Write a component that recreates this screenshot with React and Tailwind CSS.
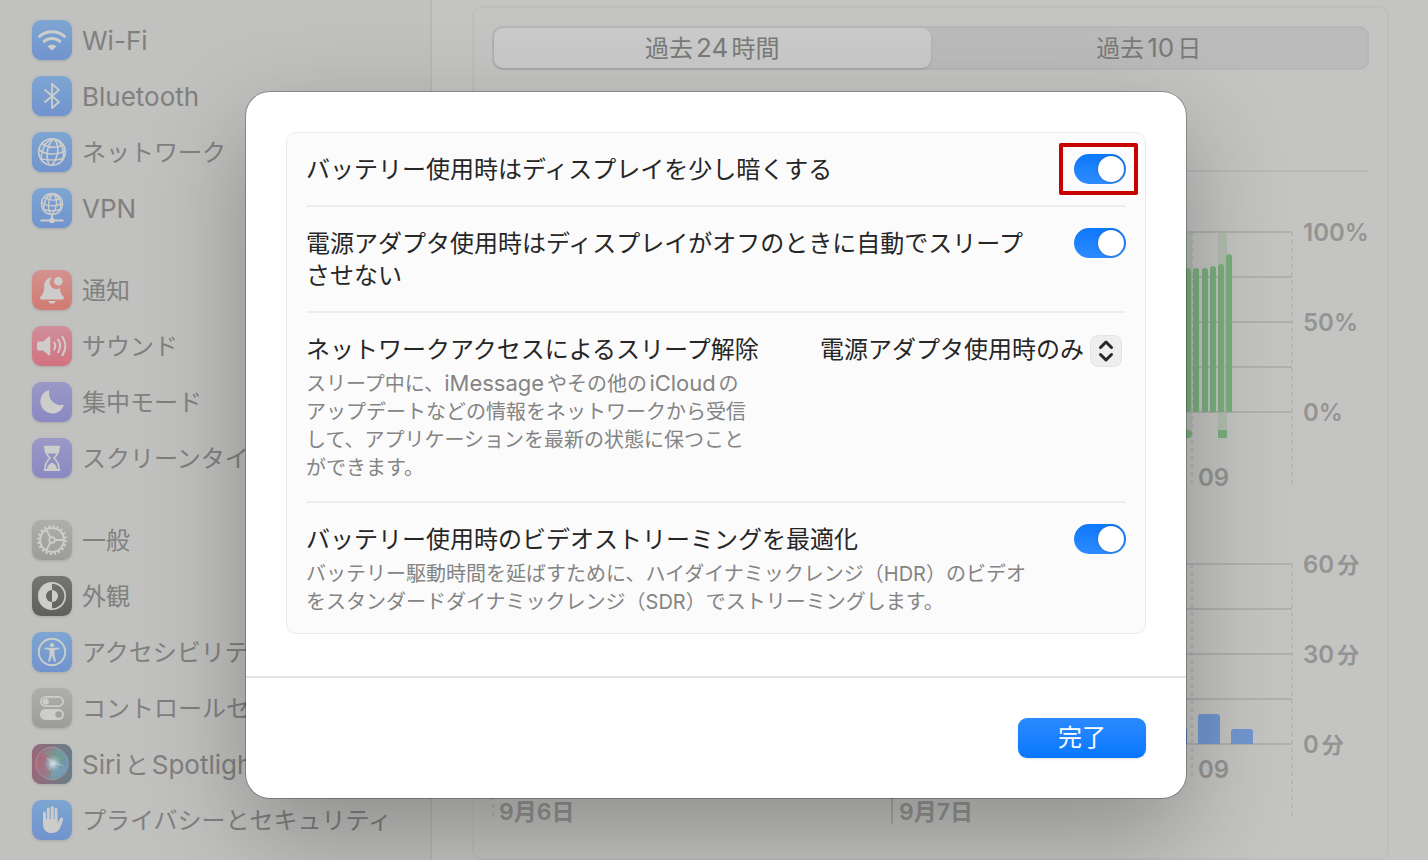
import React, { useState } from 'react';

const INK = '#cdcdcb';

const TILE = {
  blue: 'from-[#7ea5d2] to-[#7093cd]',
  red: 'from-[#d3938f] to-[#d17a72]',
  pink: 'from-[#d08e9c] to-[#d2727f]',
  purple: 'from-[#9a98c6] to-[#8a89c2]',
  gray: 'from-[#aeaeac] to-[#9c9c9a]',
  dark: 'from-[#757574] to-[#5f5f5e]',
  siri: 'from-[#8f6b7c] to-[#64808a]',
};

// Latin runs are set a step larger than the Japanese around them
function Mixed({ text, latin = 'text-[26px]' }) {
  return text.split(/([!-~]+)/).map((run, i) =>
    i % 2 ? <span key={i} className={latin}>{run}</span> : run
  );
}

function Glyph({ children }) {
  return (
    <svg width="40" height="40" viewBox="0 0 40 40" fill="none" stroke={INK} aria-hidden="true">
      {children}
    </svg>
  );
}

const wifi = (
  <Glyph>
    <g strokeWidth="3">
      <path d="M6.6 17.2a19 19 0 0 1 26.8 0" />
      <path d="M11.4 22.1a12.2 12.2 0 0 1 17.2 0" />
    </g>
    <path d="M15.6 26.4a6.2 6.2 0 0 1 8.8 0L20 30.6z" fill={INK} stroke="none" />
  </Glyph>
);

const bluetooth = (
  <Glyph>
    <path d="M12.5 13.5L27 26l-7 6V8l7 6-14.5 12.5" strokeWidth="1.8" strokeLinejoin="round" />
  </Glyph>
);

const network = (
  <Glyph>
    <g strokeWidth="1.6">
      <circle cx="20" cy="20" r="13.3" />
      <path d="M22 6.8c-6 4-9 15-5 26.2M22 6.8c5 6 6 16-2 26.4M22 6.8C15 8 10 14 9 27.5M22 6.8C28 9 32 15 31.5 26" />
      <path d="M10 11.5c6 4.5 14 4.5 21 1.5M7 18c8 5 18 5 26.3 1M9 27c7 1 17 2 22.5-1" />
    </g>
  </Glyph>
);

const vpn = (
  <Glyph>
    <g strokeWidth="1.4">
      <circle cx="20" cy="16" r="10.5" />
      <path d="M21.5 5.6c-5 4-6.5 12-3.5 20.6M21.5 5.6c4 5 4.5 13-1.5 20.9M21.5 5.6C15.5 7 12 12 11.5 21M21.5 5.6C27 8 29.5 13 28.5 21" />
      <path d="M12.5 9.5c4.5 3 11 3 16 1M9.8 15c6 3.5 14 3.5 20.6.5M11.5 21.5c5 1.5 12 1.5 17 0" />
      <path d="M20 26.5v5M8.5 32.5h23" strokeWidth="2" />
    </g>
    <circle cx="20" cy="32.5" r="2.8" fill={INK} stroke="none" />
  </Glyph>
);

const bell = (
  <Glyph>
    <g fill={INK} stroke="none">
      <path d="M20.5 7.2c-5.5.3-8.3 4-8.3 8.8 0 5.2-.8 7.3-2.6 9.4-1.4 1.5-1.8 2.2-1.5 3.2.2.7.7 1 1.5 1h20.8c.8 0 1.3-.3 1.5-1 .3-1-.1-1.7-1.5-3.2-1.5-1.8-2.3-3.8-2.5-7.4a6.2 6.2 0 0 1-7.4-10.8z" />
      <path d="M16.2 31h7.6c-.5 1.6-2 2.6-3.8 2.6s-3.3-1-3.8-2.6z" />
      <circle cx="26.3" cy="11.3" r="5.2" fill="#d28c87" />
      <circle cx="26.3" cy="11.3" r="4.3" />
    </g>
  </Glyph>
);

const speaker = (
  <Glyph>
    <path d="M5 17.2c0-1 .6-1.6 1.6-1.6h4.6l5.2-4.6c1-.9 1.9-.5 1.9.7v16.6c0 1.2-.9 1.6-1.9.7l-5.2-4.6H6.6c-1 0-1.6-.6-1.6-1.6z" fill={INK} stroke="none" />
    <g strokeWidth="2" strokeLinecap="round">
      <path d="M22.3 16.5c1.2 2.2 1.2 4.8 0 7" />
      <path d="M26.2 13.7c2.4 3.9 2.4 8.7 0 12.6" />
      <path d="M30.5 10.7c3.6 5.8 3.6 12.8 0 18.6" />
    </g>
  </Glyph>
);

const moon = (
  <Glyph>
    <path d="M16.3 8.2a12 12 0 1 0 15.4 15.3c.2-.6-.3-1-.9-.8A11.6 11.6 0 0 1 17.2 9c.2-.6-.4-1-.9-.8z" fill={INK} stroke="none" />
  </Glyph>
);

const hourglass = (
  <Glyph>
    <path d="M13.3 8.5h13.4c.8 5-1 8-4.7 11.5 3.7 3.5 5.5 7 4.7 12H13.3c-.8-5 1-8.5 4.7-12-3.7-3.5-5.5-6.5-4.7-11.5z" strokeWidth="1.7" strokeLinejoin="round" />
    <path d="M13.3 8.5h13.4c.3 3.5-.2 5.5-2 7h-9.4c-1.8-1.5-2.3-3.5-2-7zM20 17.5v7c3 1.5 4.8 3.5 5 6.5H15c.2-3 2-5 5-6.5zM11.8 8h16.4v2H11.8zM11.8 31h16.4v2H11.8z" fill={INK} stroke="none" />
  </Glyph>
);

const gear = (
  <Glyph>
    <circle cx="20" cy="20" r="13.7" strokeWidth="2.4" strokeDasharray="2.2 2.104" />
    <circle cx="20" cy="20" r="11.9" strokeWidth="2" />
    <circle cx="20" cy="20" r="2.8" strokeWidth="1.7" />
    <path d="M22.8 20h9M18.6 17.6l-4.5-7.8M18.6 22.4l-4.5 7.8" strokeWidth="1.9" />
  </Glyph>
);

// Left half solid, right half outlined, with the inner disc reversed
const appearance = (
  <Glyph>
    <circle cx="20" cy="20" r="13.2" strokeWidth="1.7" />
    <g stroke="none">
      <path d="M20 7a13 13 0 0 0 0 26z" fill={INK} />
      <path d="M20 14a6 6 0 0 0 0 12z" fill="#666665" />
      <path d="M20 14a6 6 0 0 1 0 12z" fill={INK} />
    </g>
  </Glyph>
);

const accessibility = (
  <Glyph>
    <circle cx="20" cy="20" r="13.2" strokeWidth="1.9" />
    <g fill={INK} stroke="none">
      <circle cx="20" cy="13.2" r="2.1" />
      <path d="M13.4 15.4c-1 0-1.2 1.4-.2 1.7l4.4 1.1v4.3l-1.4 6.2c-.2 1 1.4 1.5 1.8.5l2-5.7 2 5.7c.4 1 2 .5 1.8-.5l-1.4-6.2v-4.3l4.4-1.1c1-.3.8-1.7-.2-1.7L20 16z" />
    </g>
  </Glyph>
);

const controls = (
  <Glyph>
    <rect x="8.9" y="8.9" width="22.2" height="9.2" rx="4.6" strokeWidth="1.7" />
    <circle cx="13.7" cy="13.5" r="3.1" fill={INK} stroke="none" />
    <rect x="8" y="21" width="24" height="11" rx="5.5" fill={INK} stroke="none" />
    <circle cx="26.7" cy="26.5" r="3.3" fill="#a0a09e" stroke="none" />
  </Glyph>
);

const siri = (
  <Glyph>
    <defs>
      <radialGradient id="siri-core">
        <stop offset="0" stopColor="#e0e6e6" />
        <stop offset="0.35" stopColor="#b9cbd3" stopOpacity="0.8" />
        <stop offset="1" stopColor="#8fa9b8" stopOpacity="0" />
      </radialGradient>
      <linearGradient id="siri-orb" x1="0" y1="0.4" x2="1" y2="0.6">
        <stop offset="0" stopColor="#b06578" />
        <stop offset="0.45" stopColor="#93808f" />
        <stop offset="0.6" stopColor="#6f9c97" />
        <stop offset="1" stopColor="#6f93b4" />
      </linearGradient>
      <linearGradient id="siri-tile">
        <stop offset="0" stopColor="#99687a" />
        <stop offset="1" stopColor="#667f88" />
      </linearGradient>
    </defs>
    <rect width="40" height="40" fill="url(#siri-tile)" stroke="none" />
    <circle cx="20" cy="19.5" r="16.3" fill="url(#siri-orb)" stroke="#a8a2a8" strokeOpacity="0.7" />
    <path d="M11 8c8-4 19-1 21 8-6 3-12 1-21-8z" fill="#6fa08a" fillOpacity="0.5" stroke="none" />
    <path d="M20 20c5 3 10 4 15 2-2 7-8 12-17 12 2-5 3-9 2-14z" fill="#7f9fc4" fillOpacity="0.5" stroke="none" />
    <path d="M14 13l8 4 11 5-11-1-5 6 1-8z" fill="#dfe3e3" fillOpacity="0.4" stroke="none" />
    <circle cx="21" cy="19.5" r="9" fill="url(#siri-core)" stroke="none" />
  </Glyph>
);

const hand = (
  <Glyph>
    <g strokeLinecap="round" strokeWidth="2.9">
      <path d="M12.5 13v12M16.3 9v12M20.2 7.7v13M24 9.5v13" />
    </g>
    <path d="M11.05 19h14.4v4.5l2.9-5.2c.9-1.6 3.3-.8 2.7 1.1-1.3 4-2.2 7.5-4 10.2-1.5 2.3-3.7 3.5-7 3.5-6 0-9-3.6-9-9.6z" fill={INK} stroke="none" />
  </Glyph>
);

const groups = [
  [
    { label: 'Wi-Fi', tile: 'blue', icon: wifi },
    { label: 'Bluetooth', tile: 'blue', icon: bluetooth },
    { label: 'ネットワーク', tile: 'blue', icon: network },
    { label: 'VPN', tile: 'blue', icon: vpn },
  ],
  [
    { label: '通知', tile: 'red', icon: bell },
    { label: 'サウンド', tile: 'pink', icon: speaker },
    { label: '集中モード', tile: 'purple', icon: moon },
    { label: 'スクリーンタイム', tile: 'purple', icon: hourglass },
  ],
  [
    { label: '一般', tile: 'gray', icon: gear },
    { label: '外観', tile: 'dark', icon: appearance },
    { label: 'アクセシビリティ', tile: 'blue', icon: accessibility },
    { label: 'コントロールセンター', tile: 'gray', icon: controls },
    { label: 'SiriとSpotlight', tile: 'siri', icon: siri },
    { label: 'プライバシーとセキュリティ', tile: 'blue', icon: hand },
  ],
];

function Sidebar() {
  return (
    <nav className="w-[432px] shrink-0 border-r-2 border-[#b8b8b6] bg-[#c1c1bf] px-8 py-5">
      {groups.map((items, i) => (
        <ul key={i} className="mb-[42px] flex flex-col gap-4 last:mb-0">
          {items.map((item) => (
            <li key={item.label}>
              <a href="#" className="flex h-10 items-center gap-2.5 whitespace-nowrap text-[#80807f]">
                <span className={`size-10 shrink-0 overflow-hidden rounded-[9px] bg-gradient-to-b shadow-sm ${TILE[item.tile]}`}>
                  {item.icon}
                </span>
                <span className="pt-0.5 leading-8">
                  <Mixed text={item.label} />
                </span>
              </a>
            </li>
          ))}
        </ul>
      ))}
    </nav>
  );
}

function Grid({ bottom }) {
  return (
    <g stroke="#b0b0af" strokeWidth="2">
      {[12, 57, 102, 147, 192].map((y) => (
        <path key={y} d={`M0 ${y}H800`} />
      ))}
      {[0, 100, 200, 300, 400, 500, 600, 700, 800].map((x) => (
        <path key={x} d={`M${x || 1} 12V${x % 800 ? bottom : 268}`} strokeDasharray="4 4" strokeWidth="1.5" />
      ))}
    </g>
  );
}

function Chart({ labels, children }) {
  return (
    <div className="flex gap-2.5 font-semibold">
      <div className="flex min-w-0 flex-1 justify-end overflow-hidden">
        <svg width="801" height="280" viewBox="0 0 801 280" className="shrink-0">
          {children}
        </svg>
      </div>
      <div className="flex w-[66px] shrink-0 flex-col gap-[66px] whitespace-nowrap pt-px text-[22px] text-[#949493]">
        {labels.map((label) => (
          <span key={label} className="h-6 leading-6">
            <Mixed text={label} latin="text-2xl leading-6" />
          </span>
        ))}
      </div>
    </div>
  );
}

const levels = [
  [693, 48],
  [701, 48],
  [710, 48],
  [718, 46],
  [726, 44],
  [734, 34],
];

function BatteryPane() {
  return (
    <main className="min-w-0 flex-1 py-1.5 pl-10 pr-[39px]">
      <section className="rounded-[10px] border-2 border-[#bebebc] px-[18px] pb-[26px] pt-[18px]">
        <div className="flex rounded-[10px] border-2 border-[#b7b7b7] bg-[#bbbbbb] text-[#7a7a79]">
          <button className="h-10 flex-1 rounded-[9px] bg-[#cacaca] leading-9 shadow">
            <Mixed text="過去24時間" latin="leading-9 text-[26px]" />
          </button>
          <button className="h-10 flex-1 leading-9">
            <Mixed text="過去10日" latin="leading-9 text-[26px]" />
          </button>
        </div>
        <div className="mt-[100px] border-t-2 border-[#b9b9b7]" />
        <div className="mt-12">
          <Chart labels={['100%', '50%', '0%']}>
            <path d="M693 12h7v206h-7zM726 12h9v206h-9z" fill="#b2beb0" />
            <Grid bottom={268} />
            {levels.map(([x, y]) => (
              <path key={x} d={`M${x} 192V${y + 3}a3 3 0 0 1 6 0V192z`} fill="#7bb07e" />
            ))}
            <path d="M690 210h6a4 4 0 0 1 0 8h-6zM726 210h9v8h-9z" fill="#7bb07e" />
            <text x="706" y="266" fill="#949493">09</text>
          </Chart>
        </div>
        <div className="mt-[52px]">
          <Chart labels={['60分', '30分', '0分']}>
            <Grid bottom={228} />
            <path d="M673 192v-14a3 3 0 0 1 3-3h16a3 3 0 0 1 3 3v14zM706 192v-27a3 3 0 0 1 3-3h16a3 3 0 0 1 3 3v27zM739 192v-12a3 3 0 0 1 3-3h16a3 3 0 0 1 3 3v12z" fill="#7197d0" />
            <path d="M400 236v36" stroke="#a0a09f" strokeWidth="1.5" />
            <g fill="#949493">
              <text x="706" y="226">09</text>
              <text x="7" y="268" className="text-[23px] [text-autospace:no-autospace]">9月6日</text>
              <text x="407" y="268" className="text-[23px] [text-autospace:no-autospace]">9月7日</text>
            </g>
          </Chart>
        </div>
      </section>
    </main>
  );
}

function Toggle({ id, marked }) {
  const [on, setOn] = useState(true);

  return (
    <span className="relative h-[30px] shrink-0">
      <input
        id={id}
        type="checkbox"
        checked={on}
        onChange={() => setOn(!on)}
        className="flex h-[30px] w-[52px] appearance-none items-center rounded-full bg-gray-300 p-0.5 before:size-[26px] before:rounded-full before:bg-white before:shadow-[0_0_2px_rgba(0,0,0,0.4)] checked:justify-end checked:bg-gradient-to-b checked:from-[#0a78fb] checked:to-[#2c8cff]"
      />
      {marked && (
        <span className="pointer-events-none absolute -bottom-[11px] -left-[15px] -right-3 -top-[11px] rounded-xs border-4 border-[#c80000]" />
      )}
    </span>
  );
}

function Row({ id, title, note, children }) {
  return (
    <div className="flex items-start justify-between gap-8 border-b-2 border-[#ededed] pb-[19px] pt-[21px] last:border-b-0 last:pb-[17px]">
      <div>
        <label htmlFor={id} className="block leading-8 text-[#262626]">{title}</label>
        {note}
      </div>
      {children}
    </div>
  );
}

function OptionsSheet() {
  return (
    <div
      role="dialog"
      aria-modal="true"
      className="w-[940px] rounded-3xl bg-white shadow-[0_0_0_1px_rgba(0,0,0,0.25),0_36px_100px_rgba(0,0,0,0.28)]"
    >
      <div className="px-10 pb-[42px] pt-10">
        <div className="rounded-[10px] border border-[#ececec] bg-[#fbfbfb] px-[19px]">
          <Row id="dim" title="バッテリー使用時はディスプレイを少し暗くする">
            <Toggle id="dim" marked />
          </Row>
          <Row id="no-sleep" title="電源アダプタ使用時はディスプレイがオフのときに自動でスリープさせない">
            <Toggle id="no-sleep" />
          </Row>
          <Row
            id="wake"
            title="ネットワークアクセスによるスリープ解除"
            note={
              <p className="mt-1 max-w-[450px] text-xl leading-7 text-[#848484]">
                <Mixed text="スリープ中に、iMessageやその他のiCloudの" latin="text-[22px] leading-none" />
                アップデートなどの情報をネットワークから受信して、アプリケーションを最新の状態に保つことができます。
              </p>
            }
          >
            <div className="relative mr-1 shrink-0">
              <select id="wake" className="h-8 appearance-none pr-[38px] leading-8 text-[#262626]">
                <option>電源アダプタ使用時のみ</option>
              </select>
              <span className="pointer-events-none absolute right-0 top-px size-8 rounded-lg border border-[#e4e4e4] bg-[#eeeeee]">
                <svg width="30" height="30" viewBox="0 0 30 30" fill="none" stroke="#262626" strokeWidth="3" strokeLinecap="round" strokeLinejoin="round">
                  <path d="M9.5 11.5L15 6l5.5 5.5M9.5 18.5L15 24l5.5-5.5" />
                </svg>
              </span>
            </div>
          </Row>
          <Row
            id="optimize"
            title="バッテリー使用時のビデオストリーミングを最適化"
            note={
              <p className="mt-1 text-xl leading-7 text-[#848484]">
                バッテリー駆動時間を延ばすために、ハイダイナミックレンジ（HDR）のビデオをスタンダードダイナミックレンジ（SDR）でストリーミングします。
              </p>
            }
          >
            <Toggle id="optimize" />
          </Row>
        </div>
      </div>
      <div className="flex justify-end border-t-2 border-[#e2e2e2] p-10">
        <button className="h-10 w-32 rounded-[9px] bg-gradient-to-b from-[#2a8bff] to-[#0577fd] leading-10 text-white shadow">
          完了
        </button>
      </div>
    </div>
  );
}

export default function App() {
  return (
    <div lang="ja" className="relative min-h-screen overflow-hidden bg-[#c4c4c2] font-['Inter','Noto_Sans_CJK_JP',sans-serif] text-2xl [text-autospace:normal]">
      <div className="flex min-h-screen">
        <Sidebar />
        <BatteryPane />
      </div>

      {/* Sheet */}
      <div className="absolute inset-0 flex items-start justify-center pl-1 pt-[92px]">
        <OptionsSheet />
      </div>
    </div>
  );
}
